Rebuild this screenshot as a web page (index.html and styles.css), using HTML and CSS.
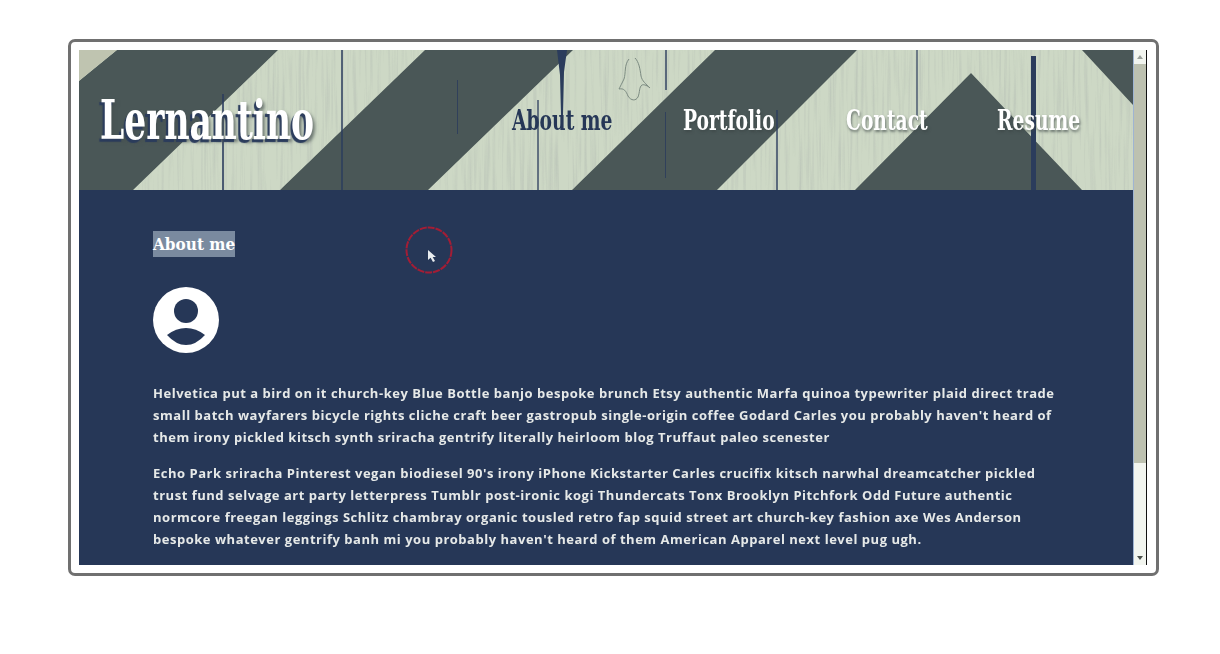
FILE: index.html
```html
<!DOCTYPE html>
<html lang="en">
<head>
    <meta charset="UTF-8">
    <meta name="viewport" content="width=device-width, initial-scale=1.0">
    <title>Lernantino</title>
    <link rel="stylesheet" href="styles.css">
</head>
<body>
    <div class="frame">
        <div class="page">
            <header class="site-header">
                <svg class="wood" viewBox="0 0 1054 140" width="1054" height="140" aria-hidden="true">
                    <defs>
                        <clipPath id="light">
                            <polygon points="0,31 38,0 0,0"/>
                            <polygon points="199,0 346,0 201,140 54,140"/>
                            <polygon points="494,0 636,0 493,140 349,140"/>
                            <polygon points="778,0 1003,0 1054,55 1054,140 1003,140 892,23 776,140 638,140"/>
                        </clipPath>
                        <filter id="grain" x="0" y="0" width="100%" height="100%">
                            <feTurbulence type="fractalNoise" baseFrequency="0.35 0.012" numOctaves="2" seed="7"/>
                            <feColorMatrix values="0 0 0 0 0.45  0 0 0 0 0.5  0 0 0 0 0.45  2.6 0 0 0 -1.25"/>
                        </filter>
                    </defs>
                    <rect width="1054" height="140" fill="#4a5757"/>
                    <g clip-path="url(#light)">
                        <rect width="1054" height="140" fill="#cdd8c5"/>
                        <rect width="1054" height="140" filter="url(#grain)" opacity="0.55"/>
                        <polygon points="0,31 38,0 0,0" fill="#bfc4b0"/>
                        <path d="M550 9c-5 6-3 14-5 20-2 4-4 8-5 10 5-1 7 2 9 7 3 5 8 5 10 1 2-5 1-10 4-12 2-1 6 1 8 3-4-4-8-7-9-12-1-7-2-14-6-18" fill="none" stroke="#7b8a80" stroke-width="1"/>
                    </g>
                    <g fill="#2b3c5c">
                        <rect x="143" y="44" width="2" height="96" opacity="0.8"/>
                        <rect x="262" y="0" width="2" height="140" opacity="0.75"/>
                        <rect x="378" y="30" width="1" height="54" opacity="0.85"/>
                        <rect x="458" y="50" width="2" height="90" opacity="0.65"/>
                        <rect x="586" y="0" width="2" height="40" opacity="0.7"/>
                        <rect x="586" y="62" width="1" height="66" opacity="0.85"/>
                        <rect x="697" y="60" width="2" height="80" opacity="0.7"/>
                        <rect x="837" y="0" width="2" height="70" opacity="0.6"/>
                        <rect x="952" y="6" width="5" height="134"/>
                        <path d="M478 0h10l-3 22-1 43-2 0-1-40z"/>
                    </g>
                </svg>
                <a class="logo" href="#"><span>Lernantino</span></a>
                <nav class="site-nav">
                    <a class="current" href="#"><span>About me</span></a>
                    <a href="#"><span>Portfolio</span></a>
                    <a href="#"><span>Contact</span></a>
                    <a href="#"><span>Resume</span></a>
                </nav>
            </header>
            <main class="content">
                <h2 class="section-title"><span>About me</span></h2>
                <svg class="avatar" viewBox="0 0 66 66" width="66" height="66" aria-hidden="true">
                    <circle cx="33" cy="33" r="33" fill="#fff"/>
                    <circle cx="33" cy="24" r="12" fill="#263757"/>
                    <path d="M14 48q9-7 19-7t19 7q-9 10-19 10t-19-10z" fill="#263757"/>
                </svg>
                <p>Helvetica put a bird on it church-key Blue Bottle banjo bespoke brunch Etsy authentic Marfa quinoa typewriter plaid direct trade small batch wayfarers bicycle rights cliche craft beer gastropub single-origin coffee Godard Carles you probably haven't heard of them irony pickled kitsch synth sriracha gentrify literally heirloom blog Truffaut paleo scenester</p>
                <p>Echo Park sriracha Pinterest vegan biodiesel 90's irony iPhone Kickstarter Carles crucifix kitsch narwhal dreamcatcher pickled trust fund selvage art party letterpress Tumblr post-ironic kogi Thundercats Tonx Brooklyn Pitchfork Odd Future authentic normcore freegan leggings Schlitz chambray organic tousled retro fap squid street art church-key fashion axe Wes Anderson bespoke whatever gentrify banh mi you probably haven't heard of them American Apparel next level pug ugh.</p>
                <svg class="click-ring" viewBox="0 0 48 48" width="48" height="48" aria-hidden="true">
                    <circle cx="24" cy="24" r="22.5" fill="none" stroke="#a31d35" stroke-width="2" stroke-dasharray="7 1"/>
                    <path d="M23 24v10l2.6-2.2L28 36l2-1-2.3-4H31z" fill="#e8ecef"/>
                </svg>
            </main>
        </div>
        <div class="scrollbar">
            <span class="arrow up"></span>
            <span class="thumb"></span>
            <span class="arrow down"></span>
        </div>
    </div>
</body>
</html>
```

FILE: styles.css
```css
body {
    margin: 0;
    padding: 39px 0 0 68px;
    background: #fff;
    font-family: "Open Sans", Arial, sans-serif;
}
a {
    text-decoration: none;
}
.frame {
    display: flex;
    width: 1068px;
    height: 515px;
    padding: 8px 9px 8px 8px;
    border: 3px solid #707070;
    border-radius: 7px;
}
.page {
    width: 1054px;
    height: 515px;
    overflow: hidden;
    background: #263757;
}
.site-header {
    position: relative;
    display: flex;
    justify-content: space-between;
    align-items: center;
    height: 140px;
    padding: 0 55px 0 21px;
    box-sizing: border-box;
}
.wood {
    position: absolute;
    top: 0;
    left: 0;
}
.logo {
    position: relative;
    width: 212px;
    white-space: nowrap;
    color: #fff;
    font-family: "DejaVu Serif Condensed", "DejaVu Serif", serif;
    font-size: 54px;
    font-weight: bold;
    text-shadow: -3px 3px 1px #2b3c5c, 3px 3px 4px rgba(70,80,80,0.7);
}
.logo span,
.site-nav span {
    display: inline-block;
    transform-origin: left center;
}
.logo span {
    transform: scaleX(0.71);
}
.site-nav {
    position: relative;
    display: grid;
    grid-template-columns: 100px 92px 80px 81px;
    gap: 71px;
}
.site-nav a {
    white-space: nowrap;
    color: #fff;
    font-family: "DejaVu Serif Condensed", "DejaVu Serif", serif;
    font-size: 27px;
    font-weight: bold;
    text-shadow: 1px 2px 3px rgba(60,70,70,0.7);
}
.site-nav span {
    transform: scaleX(0.77);
}
.site-nav a.current {
    color: #263757;
    text-shadow: none;
}
.content {
    position: relative;
    padding: 41px 74px 0;
    height: 375px;
    box-sizing: border-box;
    color: #e6e9e8;
    font-size: 13px;
    font-weight: bold;
    line-height: 22px;
}
.section-title {
    margin: 0 0 30px;
    color: #fff;
    font-family: "DejaVu Serif Condensed", "DejaVu Serif", serif;
    font-size: 17px;
    font-weight: bold;
    line-height: 26px;
}
.section-title span {
    display: inline-block;
    background: #7a8a9f;
}
.avatar {
    display: block;
    margin-bottom: 29px;
}
.content p {
    margin: 0 0 14px;
    letter-spacing: 0.52px;
    filter: blur(0.35px);
}
.click-ring {
    position: absolute;
    top: 36px;
    left: 326px;
}
.scrollbar {
    display: flex;
    flex-direction: column;
    width: 14px;
    height: 515px;
    background: #f2f5ef;
    border-left: 1px solid #9fb4d2;
    border-right: 1px solid #111;
    box-sizing: border-box;
}
.thumb {
    height: 399px;
    background: #bdc1b0;
}
.arrow {
    display: block;
    width: 0;
    height: 0;
    margin: 5px auto;
    border-left: 3px solid transparent;
    border-right: 3px solid transparent;
}
.arrow.up {
    border-bottom: 4px solid #9aa09a;
}
.arrow.down {
    margin-top: auto;
    border-top: 4px solid #4a4f4a;
}
```
